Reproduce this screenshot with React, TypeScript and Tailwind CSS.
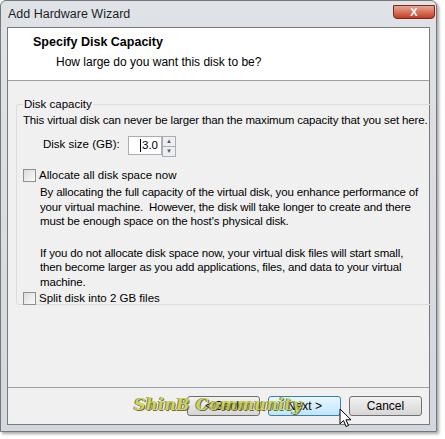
import React from 'react';

function Checkbox() {
  return (
    <span className="inline-block w-[13px] h-[13px] border border-[#8e8f8f] bg-gradient-to-br from-[#dcdcdc] to-[#fbfbfb] shrink-0" />
  );
}

function Button({ label, active }: { label: string; active?: boolean }) {
  return (
    <button
      className={`w-[73px] h-[20px] rounded-[3px] border text-[12px] leading-none ${
        active
          ? 'border-[#3c7fb1] bg-gradient-to-b from-[#eaf6fd] to-[#bee6fd]'
          : 'border-[#707070] bg-gradient-to-b from-[#f2f2f2] to-[#d6d6d6]'
      }`}
    >
      {label}
    </button>
  );
}

export default function App() {
  return (
    <div
      className="w-[445px] h-[439px] bg-white relative text-black"
      style={{ fontFamily: '"Liberation Sans", Arial, sans-serif' }}
    >
      <div className="w-[437px] h-[432px] border border-[#777] rounded-t-[6px] bg-gradient-to-b from-[#dfe3e8] to-[#d3d8de] flex flex-col shadow-[2px_2px_3px_rgba(0,0,0,0.35)]">
        <div className="h-[26px] flex items-center pl-[7px] relative">
          <span className="text-[12.5px] text-[#1e1e1e]">Add Hardware Wizard</span>
          <div className="absolute right-[1px] top-[4px] w-[42px] h-[14px] rounded-b-[4px] border border-[#7a2a1c] bg-gradient-to-b from-[#e8a593] to-[#c03b20] flex items-center justify-center">
            <span className="text-white text-[11px] font-bold leading-none">X</span>
          </div>
        </div>
        <div className="mx-[6px] mb-[6px] flex-1 border border-[#7a7a7a] bg-[#f0f0f0] flex flex-col text-[11.5px]">
          <div className="h-[53px] bg-white border-b border-[#a0a0a0] pl-[25px] pt-[7px] text-[12px]">
            <div className="font-bold text-[12.5px] leading-[15px]">Specify Disk Capacity</div>
            <div className="pl-[23px] mt-[5px] leading-[15px]">How large do you want this disk to be?</div>
          </div>
          <div className="px-[8px] pt-[16px]">
            <fieldset className="border border-[#dcdcdc] rounded-[3px] px-[6px] h-[208px]">
              <legend className="px-[1px] leading-[14px]">Disk capacity</legend>
              <div className="leading-[15px] mt-[2px] whitespace-nowrap tracking-[-0.15px]">
                This virtual disk can never be larger than the maximum capacity that you set here.
              </div>
              <div className="flex items-center mt-[6px] pl-[20px] h-[22px]">
                <span className="w-[85px]">Disk size (GB):</span>
                <div className="flex items-center">
                  <div className="w-[34px] h-[19px] border border-[#abadb3] bg-white flex items-center justify-end pr-[3px]">
                    <span className="border-l border-black pl-[1px] leading-[13px]">3.0</span>
                  </div>
                  <div className="w-[14px] h-[19px] flex flex-col">
                    <div className="flex-1 border border-[#abadb3] bg-[#eceef1] flex items-center justify-center text-[6px] text-[#555]">▲</div>
                    <div className="flex-1 border border-t-0 border-[#abadb3] bg-[#eceef1] flex items-center justify-center text-[6px] text-[#555]">▼</div>
                  </div>
                </div>
              </div>
              <div className="flex items-center gap-[3px] mt-[12px] leading-[15px]">
                <Checkbox />
                <span>Allocate all disk space now</span>
              </div>
              <div className="pl-[17px] mt-[2px] leading-[14.5px] tracking-[-0.15px] whitespace-nowrap">
                <p>
                  By allocating the full capacity of the virtual disk, you enhance performance of
                  <br />
                  your virtual machine.&nbsp; However, the disk will take longer to create and there
                  <br />
                  must be enough space on the host's physical disk.
                </p>
                <p className="mt-[17px]">
                  If you do not allocate disk space now, your virtual disk files will start small,
                  <br />
                  then become larger as you add applications, files, and data to your virtual
                  <br />
                  machine.
                </p>
              </div>
              <div className="flex items-center gap-[3px] mt-[2px] leading-[15px]">
                <Checkbox />
                <span>Split disk into 2 GB files</span>
              </div>
            </fieldset>
          </div>
          <div className="flex-1" />
          <div className="border-t border-[#a0a0a0] h-[37px] flex items-center justify-end gap-[8px] pr-[7px] relative">
            <Button label="< Back" />
            <Button label="Next >" active />
            <Button label="Cancel" />
            <span
              className="absolute left-[126px] top-[9px] text-[16px] font-bold italic text-[#c9cf4a] leading-none pointer-events-none opacity-85 tracking-[0.3px]"
              style={{ fontFamily: '"DejaVu Serif", serif', textShadow: '1px 1px 0 #5b5b20, -1px 0 0 #6a6a2a' }}
            >
              ShinB Community
            </span>
            <svg className="absolute left-[331px] top-[20px]" width="13" height="20" viewBox="0 0 13 20">
              <path d="M1 1 L1 16 L4.5 12.5 L7 18.5 L9.5 17.5 L7 11.8 L12 11.8 Z" fill="white" stroke="black" strokeWidth="1" />
            </svg>
          </div>
        </div>
      </div>
    </div>
  );
}
